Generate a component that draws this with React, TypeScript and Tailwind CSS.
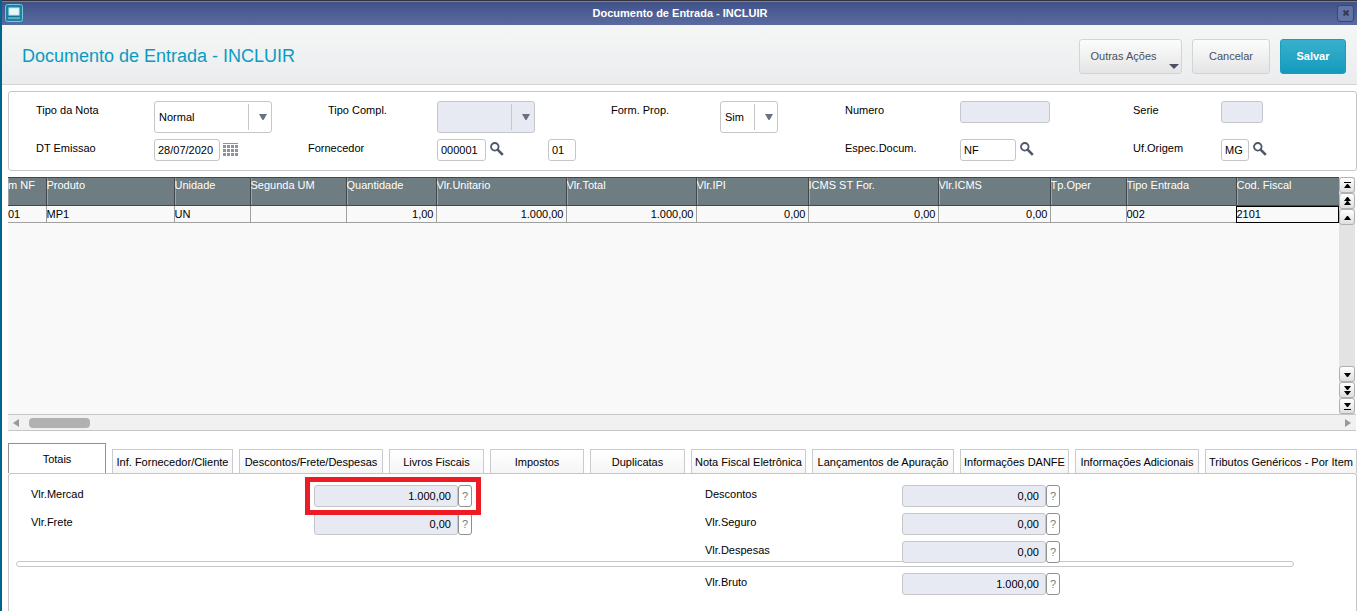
import React, { useState } from "react";

interface Column {
  title: string;
  value: string;
  width: number;
  right?: boolean;
}

const columns: Column[] = [
  { title: "m NF",         value: "01",       width: 38 },
  { title: "Produto",      value: "MP1",      width: 128 },
  { title: "Unidade",      value: "UN",       width: 76 },
  { title: "Segunda UM",   value: "",         width: 96 },
  { title: "Quantidade",   value: "1,00",     width: 90,  right: true },
  { title: "Vlr.Unitario", value: "1.000,00", width: 130, right: true },
  { title: "Vlr.Total",    value: "1.000,00", width: 130, right: true },
  { title: "Vlr.IPI",      value: "0,00",     width: 112, right: true },
  { title: "ICMS ST For.", value: "0,00",     width: 130, right: true },
  { title: "Vlr.ICMS",     value: "0,00",     width: 112, right: true },
  { title: "Tp.Oper",      value: "",         width: 76 },
  { title: "Tipo Entrada", value: "002",      width: 110 },
  { title: "Cod. Fiscal",  value: "2101",     width: 103 },
];

const tabs = [
  "Totais",
  "Inf. Fornecedor/Cliente",
  "Descontos/Frete/Despesas",
  "Livros Fiscais",
  "Impostos",
  "Duplicatas",
  "Nota Fiscal Eletrônica",
  "Lançamentos de Apuração",
  "Informações DANFE",
  "Informações Adicionais",
  "Tributos Genéricos - Por Item",
];

const SearchIcon = () => (
  <svg width="14" height="14" viewBox="0 0 14 14" fill="none" stroke="#4d586b">
    <circle cx="4.8" cy="4.8" r="3.8" strokeWidth="1.8" />
    <path d="M7.6 7.6 L12.8 12.8" strokeWidth="2.6" />
  </svg>
);

const CalendarIcon = () => (
  <svg width="15" height="14" viewBox="0 0 15 14" fill="#8b92a0">
    <rect width="15" height="1" />
    {[2, 6, 10].map((y) =>
      [0, 4, 8, 12].map((x) => <rect key={`${x}-${y}`} x={x} y={y} width="3" height="3" />)
    )}
  </svg>
);

const LookupButton = ({ label }: { label: string }) => (
  <button type="button" aria-label={label} className="ml-1 pb-[2px]">
    <SearchIcon />
  </button>
);

const TextBox = ({ id, value = "", width, disabled, label }: {
  id: string; value?: string; width: string; disabled?: boolean; label?: string;
}) => (
  <input
    id={id}
    aria-label={label}
    defaultValue={value}
    disabled={disabled}
    className={`h-[22px] rounded-[3px] border border-[#c4c6c8] bg-white px-[3px] disabled:bg-[#e7eaf3] ${width}`}
  />
);

const SelectBox = ({ id, options, width, disabled }: {
  id: string; options: string[]; width: string; disabled?: boolean;
}) => (
  <div className={`relative ${width}`}>
    <select
      id={id}
      disabled={disabled}
      className="h-8 w-full appearance-none rounded-[3px] border border-[#c4c6c8] bg-white px-1 text-black opacity-100 disabled:bg-[#e7eaf3]"
    >
      {options.map((o) => <option key={o}>{o}</option>)}
    </select>
    <div className="pointer-events-none absolute inset-y-[3px] right-0 flex w-6 items-center justify-center border-l border-[#c4c6c8] pl-1">
      <svg width="8" height="6" viewBox="0 0 8 6"><path d="M0 0H8L4.5 6H3.5Z" fill="#687283" /></svg>
    </div>
  </div>
);

const Label = ({ htmlFor, children, indent }: { htmlFor: string; children: React.ReactNode; indent?: boolean }) => (
  <label htmlFor={htmlFor} className={`h-[18px] leading-[18px] whitespace-nowrap ${indent ? "pl-5" : ""}`}>
    {children}
  </label>
);

const ScrollButton = ({ label, d }: { label: string; d: string }) => (
  <button
    aria-label={label}
    className="flex h-4 w-4 items-center justify-center rounded-[3px] border border-[#b0b0b0] bg-linear-to-b from-white to-[#dedede]"
  >
    <svg width="9" height="9" viewBox="0 0 9 9"><path d={d} fill="#000" /></svg>
  </button>
);

const TotalField = ({ id, value, highlight }: { id: string; value: string; highlight?: boolean }) => (
  <div className={`relative flex w-[158px] ${highlight ? "z-20" : "z-10"}`}>
    <input
      id={id}
      readOnly
      value={value}
      className="h-[22px] w-36 rounded-[3px] border border-[#c4c6c8] bg-[#e7eaf3] px-[6px] text-right"
    />
    <button aria-label={`Ajuda ${id}`} className="h-[22px] w-[14px] rounded-[3px] border border-[#8f8f8f] bg-white text-[#7a7a7a]">
      ?
    </button>
    {highlight && <span className="pointer-events-none absolute -inset-x-[9px] -inset-y-2 border-5 border-[#ed1c24]" />}
  </div>
);

const totalsGrid = "grid grid-cols-[283fr_391fr_197fr_454fr] pl-[22px]";

export default function App() {
  const [active, setActive] = useState(0);

  return (
    <div className="mr-px border-l-2 border-[#00658c] bg-white font-['Liberation_Sans',Arial,sans-serif] text-[11px] text-black">
      {/* Window bar */}
      <div className="flex h-[25px] items-center border-t border-[#333238] bg-linear-to-b from-[#3f5187] to-[#5b6ba0] px-[3px] shadow-[inset_0_1px_0_#77809f]">
        <svg width="18" height="18" viewBox="0 0 18 18">
          <rect x="0.5" y="0.5" width="17" height="17" rx="2" fill="#1685a5" stroke="#7fc3d4" />
          <rect x="4" y="4" width="10" height="7" fill="#e9f7fa" stroke="#c5e6ee" />
          <path d="M4 12H14L15 14H3Z" fill="#1b6f8a" />
          <path d="M3 14H15" stroke="#9fdbe8" />
        </svg>
        <span className="flex-1 text-center font-bold text-white">Documento de Entrada - INCLUIR</span>
        <button aria-label="Fechar" className="flex h-[17px] w-[17px] items-center justify-center rounded-[3px] border border-[#35467a] bg-[#6473a6]">
          <svg width="6" height="6" viewBox="0 0 6 6"><path d="M0.5 0.5L5.5 5.5M5.5 0.5L0.5 5.5" stroke="#343a52" strokeWidth="2" /></svg>
        </button>
      </div>

      {/* Page header */}
      <header className="flex h-[60px] items-center justify-between border-b border-[#d2d4d6] bg-linear-to-b from-[#f5f7f6] to-[#ebecee] pt-1 pr-[11px] pl-5">
        <h1 className="text-[18px] text-[#0a9bc2]">Documento de Entrada - INCLUIR</h1>
        <div className="flex gap-[10px] text-[#4b4f5c]">
          <button className="relative h-[35px] w-[103px] rounded-[3px] border border-[#d3d4d6] bg-linear-to-b from-[#fcfcfc] to-[#e5e5e6] pr-[14px]">
            Outras Ações
            <svg className="absolute right-[2px] bottom-1" width="10" height="5" viewBox="0 0 10 5"><path d="M0 0H10L5 5Z" fill="#4b5160" /></svg>
          </button>
          <button className="h-[35px] w-[78px] rounded-[3px] border border-[#d3d4d6] bg-linear-to-b from-[#fcfcfc] to-[#e5e5e6]">Cancelar</button>
          <button className="h-[35px] w-[66px] rounded-[3px] border border-[#1d9dbd] bg-linear-to-b from-[#38b0cd] to-[#109bbd] font-bold text-white">Salvar</button>
        </div>
      </header>

      {/* Document data */}
      <form className="mt-[6px] ml-[6px] grid grid-cols-[118fr_154fr_129fr_174fr_109fr_125fr_115fr_173fr_88fr_135fr] gap-y-[6px] rounded-[3px] border border-[#c4c6c8] py-[9px] pl-[27px]">
        <Label htmlFor="tipo">Tipo da Nota</Label>
        <SelectBox id="tipo" options={["Normal"]} width="w-[118px]" />
        <Label htmlFor="compl" indent>Tipo Compl.</Label>
        <SelectBox id="compl" options={[""]} width="w-[98px]" disabled />
        <Label htmlFor="form">Form. Prop.</Label>
        <SelectBox id="form" options={["Sim"]} width="w-[58px]" />
        <Label htmlFor="numero">Numero</Label>
        <TextBox id="numero" width="w-[90px]" disabled />
        <Label htmlFor="serie">Serie</Label>
        <TextBox id="serie" width="w-[42px]" disabled />

        <Label htmlFor="emissao">DT Emissao</Label>
        <div className="flex items-center">
          <TextBox id="emissao" value="28/07/2020" width="w-[66px]" />
          <button type="button" aria-label="Calendário" className="ml-[3px]"><CalendarIcon /></button>
        </div>
        <Label htmlFor="fornecedor">Fornecedor</Label>
        <div className="flex items-center">
          <TextBox id="fornecedor" value="000001" width="w-[49px]" />
          <LookupButton label="Pesquisar fornecedor" />
          <div className="ml-11 flex">
            <TextBox id="loja" label="Loja" value="01" width="w-[28px]" />
          </div>
        </div>
        <span />
        <span />
        <Label htmlFor="especie">Espec.Docum.</Label>
        <div className="flex items-center">
          <TextBox id="especie" value="NF" width="w-[56px]" />
          <LookupButton label="Pesquisar espécie" />
        </div>
        <Label htmlFor="uf">Uf.Origem</Label>
        <div className="flex items-center">
          <TextBox id="uf" value="MG" width="w-[28px]" />
          <LookupButton label="Pesquisar UF" />
        </div>
      </form>

      {/* Items */}
      <section className="mt-[6px] mr-px ml-[6px]">
        <div className="mr-px flex h-[237px] bg-[#f9f9f9]">
          <div className="min-w-0 flex-1">
            <table className="w-full table-fixed border-collapse">
              <colgroup>
                {columns.map((c) => <col key={c.title} style={{ width: c.width }} />)}
              </colgroup>
              <thead>
                <tr className="h-7 border-y border-[#43494b] bg-[#6e7d81] text-white">
                  {columns.map((c) => (
                    <th key={c.title} className="overflow-hidden border-r border-[#43494b] p-0 text-left align-top leading-[15px] font-normal whitespace-nowrap shadow-[inset_1px_0_0_#9aa4a7]">
                      {c.title}
                    </th>
                  ))}
                </tr>
              </thead>
              <tbody>
                <tr className="h-[17px]">
                  {columns.map((c, i) => (
                    <td
                      key={c.title}
                      className={`overflow-hidden border-r border-b border-[#a0a0a0] p-0 leading-4 ${c.right ? "pr-[2px] text-right" : ""} ${i === columns.length - 1 ? "outline outline-black -outline-offset-1" : ""}`}
                    >
                      {c.value}
                    </td>
                  ))}
                </tr>
              </tbody>
            </table>
          </div>
          <div className="flex w-4 flex-col justify-between bg-[#e3e3e3]">
            <div>
              <ScrollButton label="Primeira linha" d="M1 1H8V2H1ZM4 3H5L8 7H1Z" />
              <ScrollButton label="Página anterior" d="M4 0H5L8 4H1ZM4 4H5L8 8H1Z" />
              <ScrollButton label="Linha anterior" d="M4 3H5L8 7H1Z" />
            </div>
            <div>
              <ScrollButton label="Próxima linha" d="M1 3H8L5 7H4Z" />
              <ScrollButton label="Próxima página" d="M1 0H8L5 4H4ZM1 5H8L5 9H4Z" />
              <ScrollButton label="Última linha" d="M1 1H8L5 5H4ZM1 7H8V8H1Z" />
            </div>
          </div>
        </div>
        <div className="flex h-[17px] items-center border-y border-[#c4c6c8] bg-[#f1f1f1] px-[5px]">
          <svg width="6" height="8" viewBox="0 0 6 8"><path d="M6 0V8L0 4Z" fill="#999" /></svg>
          <div className="flex flex-1">
            <div className="ml-[10px] h-[10px] w-[61px] rounded-[4px] bg-[#b1b1b1]" />
          </div>
          <svg width="6" height="8" viewBox="0 0 6 8"><path d="M0 0V8L6 4Z" fill="#999" /></svg>
        </div>
      </section>

      {/* Tabs */}
      <div role="tablist" className="mt-3 ml-[6px] grid grid-cols-[98fr_121fr_144fr_95fr_94fr_95fr_115fr_142fr_109fr_124fr_152fr] items-end gap-[6px]">
        {tabs.map((t, i) => (
          <button
            key={t}
            role="tab"
            aria-selected={i === active}
            onClick={() => setActive(i)}
            className={
              i === active
                ? "h-[30px] border border-b-0 border-[#8f9193] bg-white pt-px whitespace-nowrap"
                : "h-6 border border-b-0 border-[#c9cbcd] bg-linear-to-b from-white to-[#f5f5f5] pt-px whitespace-nowrap"
            }
          >
            {t}
          </button>
        ))}
      </div>

      {/* Totals */}
      <section className="ml-[6px] rounded-t-[3px] border border-b-0 border-[#c4c6c8] pt-[11px] pb-4">
        <div className={`${totalsGrid} gap-y-[6px]`}>
          <Label htmlFor="mercad">Vlr.Mercad</Label>
          <TotalField id="mercad" value="1.000,00" highlight />
          <Label htmlFor="descontos">Descontos</Label>
          <TotalField id="descontos" value="0,00" />
          <Label htmlFor="frete">Vlr.Frete</Label>
          <TotalField id="frete" value="0,00" />
          <Label htmlFor="seguro">Vlr.Seguro</Label>
          <TotalField id="seguro" value="0,00" />
          <span />
          <span />
          <Label htmlFor="despesas">Vlr.Despesas</Label>
          <TotalField id="despesas" value="0,00" />
        </div>
        <div className="-mt-[2px] mr-[62px] mb-[6px] ml-[7px] h-[6px] rounded-[3px] border border-[#c4c6c8]" />
        <div className={totalsGrid}>
          <span />
          <span />
          <Label htmlFor="bruto">Vlr.Bruto</Label>
          <TotalField id="bruto" value="1.000,00" />
        </div>
      </section>
    </div>
  );
}
